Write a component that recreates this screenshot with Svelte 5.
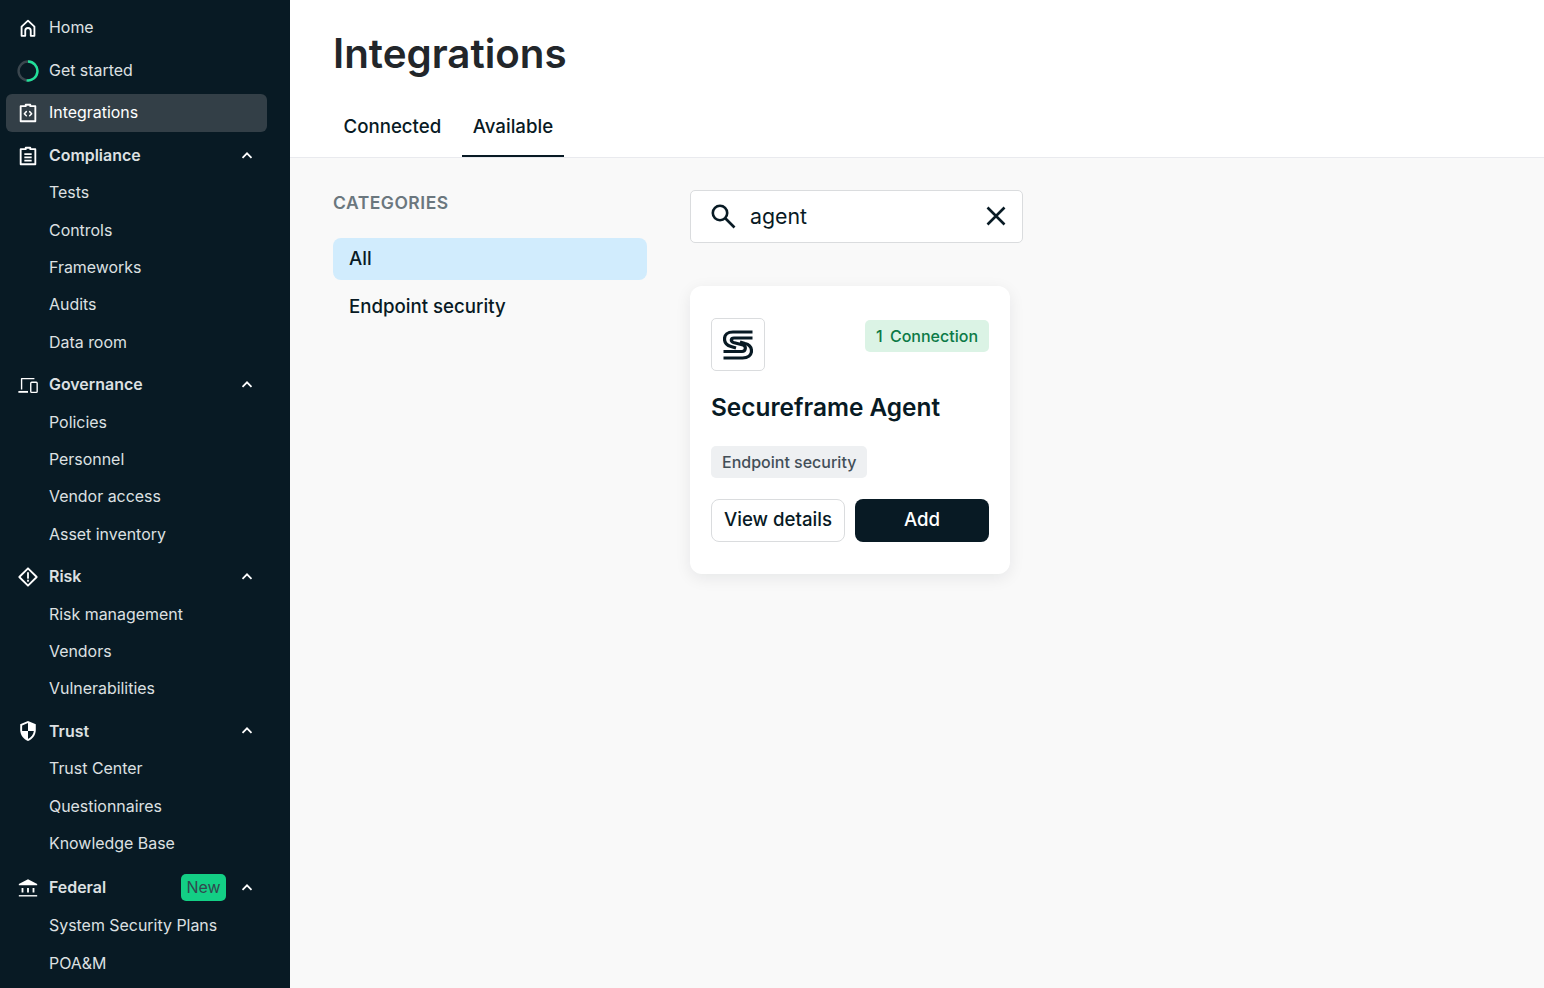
<script>
// sidebar rows: head = bold section with chevron, plain rows are children
const groups = [
  { name: 'Compliance', icon: 'clip', items: ['Tests', 'Controls', 'Frameworks', 'Audits', 'Data room'] },
  { name: 'Governance', icon: 'devices', items: ['Policies', 'Personnel', 'Vendor access', 'Asset inventory'] },
  { name: 'Risk', icon: 'risk', items: ['Risk management', 'Vendors', 'Vulnerabilities'] },
  { name: 'Trust', icon: 'shield', items: ['Trust Center', 'Questionnaires', 'Knowledge Base'] },
  { name: 'Federal', icon: 'bank', badge: 'New', items: ['System Security Plans', 'POA&M'] }
];
</script>

{#snippet icon(kind)}
  <svg class="ico" class:ring={kind === 'ring'} viewBox="0 0 24 24" fill="none" stroke="currentColor" stroke-width="2" stroke-linejoin="round" stroke-linecap="round">
    {#if kind === 'home'}
      <path d="M5 20.500V10.500L12 4l7 6.500V20.500H15V15a3 3 0 0 0-6 0V20.500Z" />
    {:else if kind === 'ring'}
      <circle cx="12" cy="12" r="10.300" stroke="#3a464e" stroke-width="2.600" />
      <path d="M12 1.700A10.300 10.300 0 1 1 10.500 22.190" stroke="#20e09a" stroke-width="2.600" stroke-linecap="butt" />
    {:else if kind === 'code'}
      <path d="M9.500 4.500V3h5v1.500H20V21H4V4.500Z" />
      <path d="M10.200 10.500 8 12.800l2.200 2.300M13.800 10.500 16 12.800l-2.200 2.300" stroke-width="1.600" />
    {:else if kind === 'clip'}
      <path d="M9.500 4.500V3h5v1.500H20V21H4V4.500Z" />
      <path d="M8 10h8M8 13.500h8M8 17h8" stroke-width="1.800" stroke-linecap="butt" />
    {:else if kind === 'devices'}
      <path d="M5 17V5h14" stroke-width="1.500" stroke-linecap="butt" />
      <path d="M1.500 19.500H12" stroke-width="2" stroke-linecap="butt" />
      <rect x="15" y="9" width="7" height="11" rx="1" stroke-width="1.500" />
    {:else if kind === 'risk'}
      <path d="M12 2.500 21.500 12 12 21.500 2.500 12Z" />
      <path d="M12 7.500v5.500M12 15.800v.5" stroke-width="2" />
    {:else if kind === 'shield'}
      <path d="M12 1 3.500 4.500v6.500c0 5.500 3.600 10 8.500 12 4.900-2 8.500-6.500 8.500-12V4.500Z" fill="currentColor" stroke="none" />
      <path d="M12 3.200v8.800H5.600V6ZM12 12h6.400c-.5 3.800-3 7-6.400 8.800Z" fill="#081a24" stroke="none" />
    {:else if kind === 'bank'}
      <path d="M12 2.500 2 7.500V9h20V7.500Z" fill="currentColor" stroke="none" />
      <path d="M6 12v5M12 12v5M18 12v5" stroke-width="2" stroke-linecap="butt" />
      <path d="M2 20.500h20" stroke-width="1.500" stroke-linecap="butt" />
    {/if}
  </svg>
{/snippet}

<div class="page">
  <nav class="side">
    <a class="top">{@render icon('home')}<span>Home</span></a>
    <a class="top">{@render icon('ring')}<span>Get started</span></a>
    <a class="top current">{@render icon('code')}<span>Integrations</span></a>
    {#each groups as g}
      <a class="top head" class:federal={g.badge}>
        {@render icon(g.icon)}
        <span class="label">{g.name}</span>
        {#if g.badge}<em class="new">{g.badge}</em>{/if}
        <svg class="chev" viewBox="0 0 12 8" fill="none" stroke="currentColor" stroke-width="1.800"><path d="M1.500 6.300 6 1.800l4.500 4.500" /></svg>
      </a>
      {#each g.items as item}
        <a class="sub" class:wide={g.badge}>{item}</a>
      {/each}
    {/each}
  </nav>

  <main class="main">
    <header class="top-bar">
      <h1>Integrations</h1>
      <div class="tabs">
        <button class="tab">Connected</button>
        <button class="tab active">Available</button>
      </div>
    </header>

    <div class="body">
      <aside class="cats">
        <h2>CATEGORIES</h2>
        <div class="cat selected">All</div>
        <div class="cat">Endpoint security</div>
      </aside>

      <section class="results">
        <div class="search">
          <svg class="s-ico" viewBox="0 0 26 26" fill="none" stroke="#081a24" stroke-width="2.600"><circle cx="10" cy="10" r="7.200" /><path d="m15.500 15.500 9 9" /></svg>
          <span class="q">agent</span>
          <svg class="x-ico" viewBox="0 0 20 20" fill="none" stroke="#081a24" stroke-width="2.600"><path d="m1.500 1.500 17 17M18.500 1.500l-17 17" /></svg>
        </div>

        <article class="card">
          <div class="card-top">
            <div class="logo">
              <svg viewBox="0 0 30 30" width="30" height="30" fill="none" stroke="#081a24" stroke-width="3.200">
                <path d="M29.500 2H10C4.500 2 1.500 5 1.500 9c0 4 2.500 6.500 6.500 7.500l5 1.500" />
                <path d="M29.500 8H11c-3.500 0-3.500 3.500-.5 4.500l9.500 2.500c3.500 1 3 6.500-1 6.500H.5" />
                <path d="M.5 28h19c5.500 0 9-3 9-7 0-4-2.500-6.500-6.500-7.500l-5-1.500" />
              </svg>
            </div>
            <span class="conn">1 Connection</span>
          </div>
          <h3>Secureframe Agent</h3>
          <span class="tag">Endpoint security</span>
          <div class="actions">
            <button class="btn ghost">View details</button>
            <button class="btn solid">Add</button>
          </div>
        </article>
      </section>
    </div>
  </main>
</div>

<style>
:global(body) {
  margin: 0;
  font-family: Inter, "Liberation Sans", sans-serif;
  background: #f9f9f9;
}

.page {
  display: flex;
  height: 988px;
  overflow: hidden;
}

.side {
  width: 290px;
  flex: none;
  box-sizing: border-box;
  padding: 3.6px 23px 0 6px;
  background: #081a24;
  color: #dde0e2;
  font-size: 15.93px;
}

.top {
  display: flex;
  align-items: center;
  height: 37.33px;
  margin-top: 5.33px;
  padding: 0 14px 0 10.5px;
  border-radius: 6px;
}

.head { font-weight: 600; }
.federal { margin-top: 6.75px; }

.current {
  background: #333f47;
  color: #fff;
}

.ico {
  width: 22px;
  height: 22px;
  margin-right: 10.5px;
  flex: none;
  color: #fff;
}

.ring { transform: translateY(1px); }

.label { flex: 1; }

.new {
  margin-right: 15px;
  padding: 0 5.5px;
  height: 27px;
  line-height: 27px;
  border-radius: 5px;
  background: #13cf85;
  color: #31494f;
  font-style: normal;
  font-weight: 400;
}

.chev {
  width: 12px;
  height: 8px;
  color: #fff;
  transform: translateY(-.5px);
}

.sub {
  display: flex;
  align-items: center;
  height: 37.33px;
  padding-left: 43px;
}

.wide { height: 38px; }

.main {
  flex: 1;
  min-width: 0;
}

.top-bar {
  height: 157px;
  background: #fff;
  padding-left: 43px;
  box-shadow: 0 1px 0 #e9eaee;
}

h1 {
  margin: 0;
  padding-top: 30px;
  height: 67px;
  font-size: 40.3px;
  line-height: 48px;
  font-weight: 600;
  color: #22262a;
}

.tabs {
  display: flex;
  gap: 10.5px;
  margin-top: 3px;
}

.tab {
  height: 57px;
  padding: 0 10.5px 3px;
  border: 0;
  border-bottom: 2px solid transparent;
  background: none;
  font: 500 18.67px Inter, sans-serif;
  color: #081a24;
}

.tab.active { border-bottom-color: #081a24; }

.body {
  display: flex;
  gap: 43px;
  padding: 33px 0 0 43px;
}

.cats { width: 314px; flex: none; }

h2 {
  margin: 0 0 23px;
  font-size: 17.5px;
  line-height: 25px;
  font-weight: 600;
  letter-spacing: .5px;
  color: #6b777e;
}

.cat {
  height: 42px;
  margin-bottom: 6px;
  padding-left: 16px;
  border-radius: 8px;
  line-height: 42px;
  font-size: 18.67px;
  font-weight: 500;
  color: #081a24;
}

.selected { background: #d1ecfd; }

.results { width: 333px; }

.search {
  display: flex;
  align-items: center;
  height: 53px;
  box-sizing: border-box;
  padding: 0 16px 2px 19px;
  border: 1px solid #dadcde;
  border-radius: 5px;
  background: #fff;
}

.s-ico { width: 26px; height: 26px; flex: none; }
.x-ico { width: 20px; height: 20px; flex: none; }

.q {
  flex: 1;
  margin-left: 14px;
  font-size: 21.33px;
  color: #081a24;
}

.card {
  width: 320px;
  height: 288px;
  box-sizing: border-box;
  margin-top: 43px;
  padding: 32px 21px 0;
  border-radius: 12px;
  background: #fff;
  box-shadow: 0 4px 16px rgba(8, 26, 36, .08);
}

.card-top {
  display: flex;
  justify-content: space-between;
  align-items: flex-start;
}

.logo {
  display: flex;
  align-items: center;
  justify-content: center;
  width: 54px;
  height: 53px;
  box-sizing: border-box;
  border: 1px solid #dadcde;
  border-radius: 5px;
}

.conn {
  margin-top: 2px;
  height: 32px;
  line-height: 32px;
  padding: 0 11px;
  border-radius: 5px;
  background: #dbf3e5;
  color: #0c7a47;
  font-size: 16px;
  font-weight: 500;
  word-spacing: 3px;
}

h3 {
  margin: 19px 0 22px;
  font-size: 24.4px;
  line-height: 34px;
  font-weight: 600;
  color: #081a24;
}

.tag {
  display: inline-block;
  height: 32px;
  line-height: 32px;
  padding: 0 11px;
  border-radius: 5px;
  background: #eef0f2;
  color: #434f58;
  font-size: 16px;
  font-weight: 500;
}

.actions {
  display: flex;
  gap: 10px;
  margin-top: 21px;
}

.btn {
  flex: 0 0 134px;
  height: 43px;
  padding: 0 0 2px;
  box-sizing: border-box;
  border-radius: 8px;
  font: 500 18.67px Inter, sans-serif;
}

.ghost {
  border: 1px solid #dadcde;
  background: #fff;
  color: #081a24;
}

.solid {
  border: 0;
  background: #081a24;
  color: #fff;
}
</style>
